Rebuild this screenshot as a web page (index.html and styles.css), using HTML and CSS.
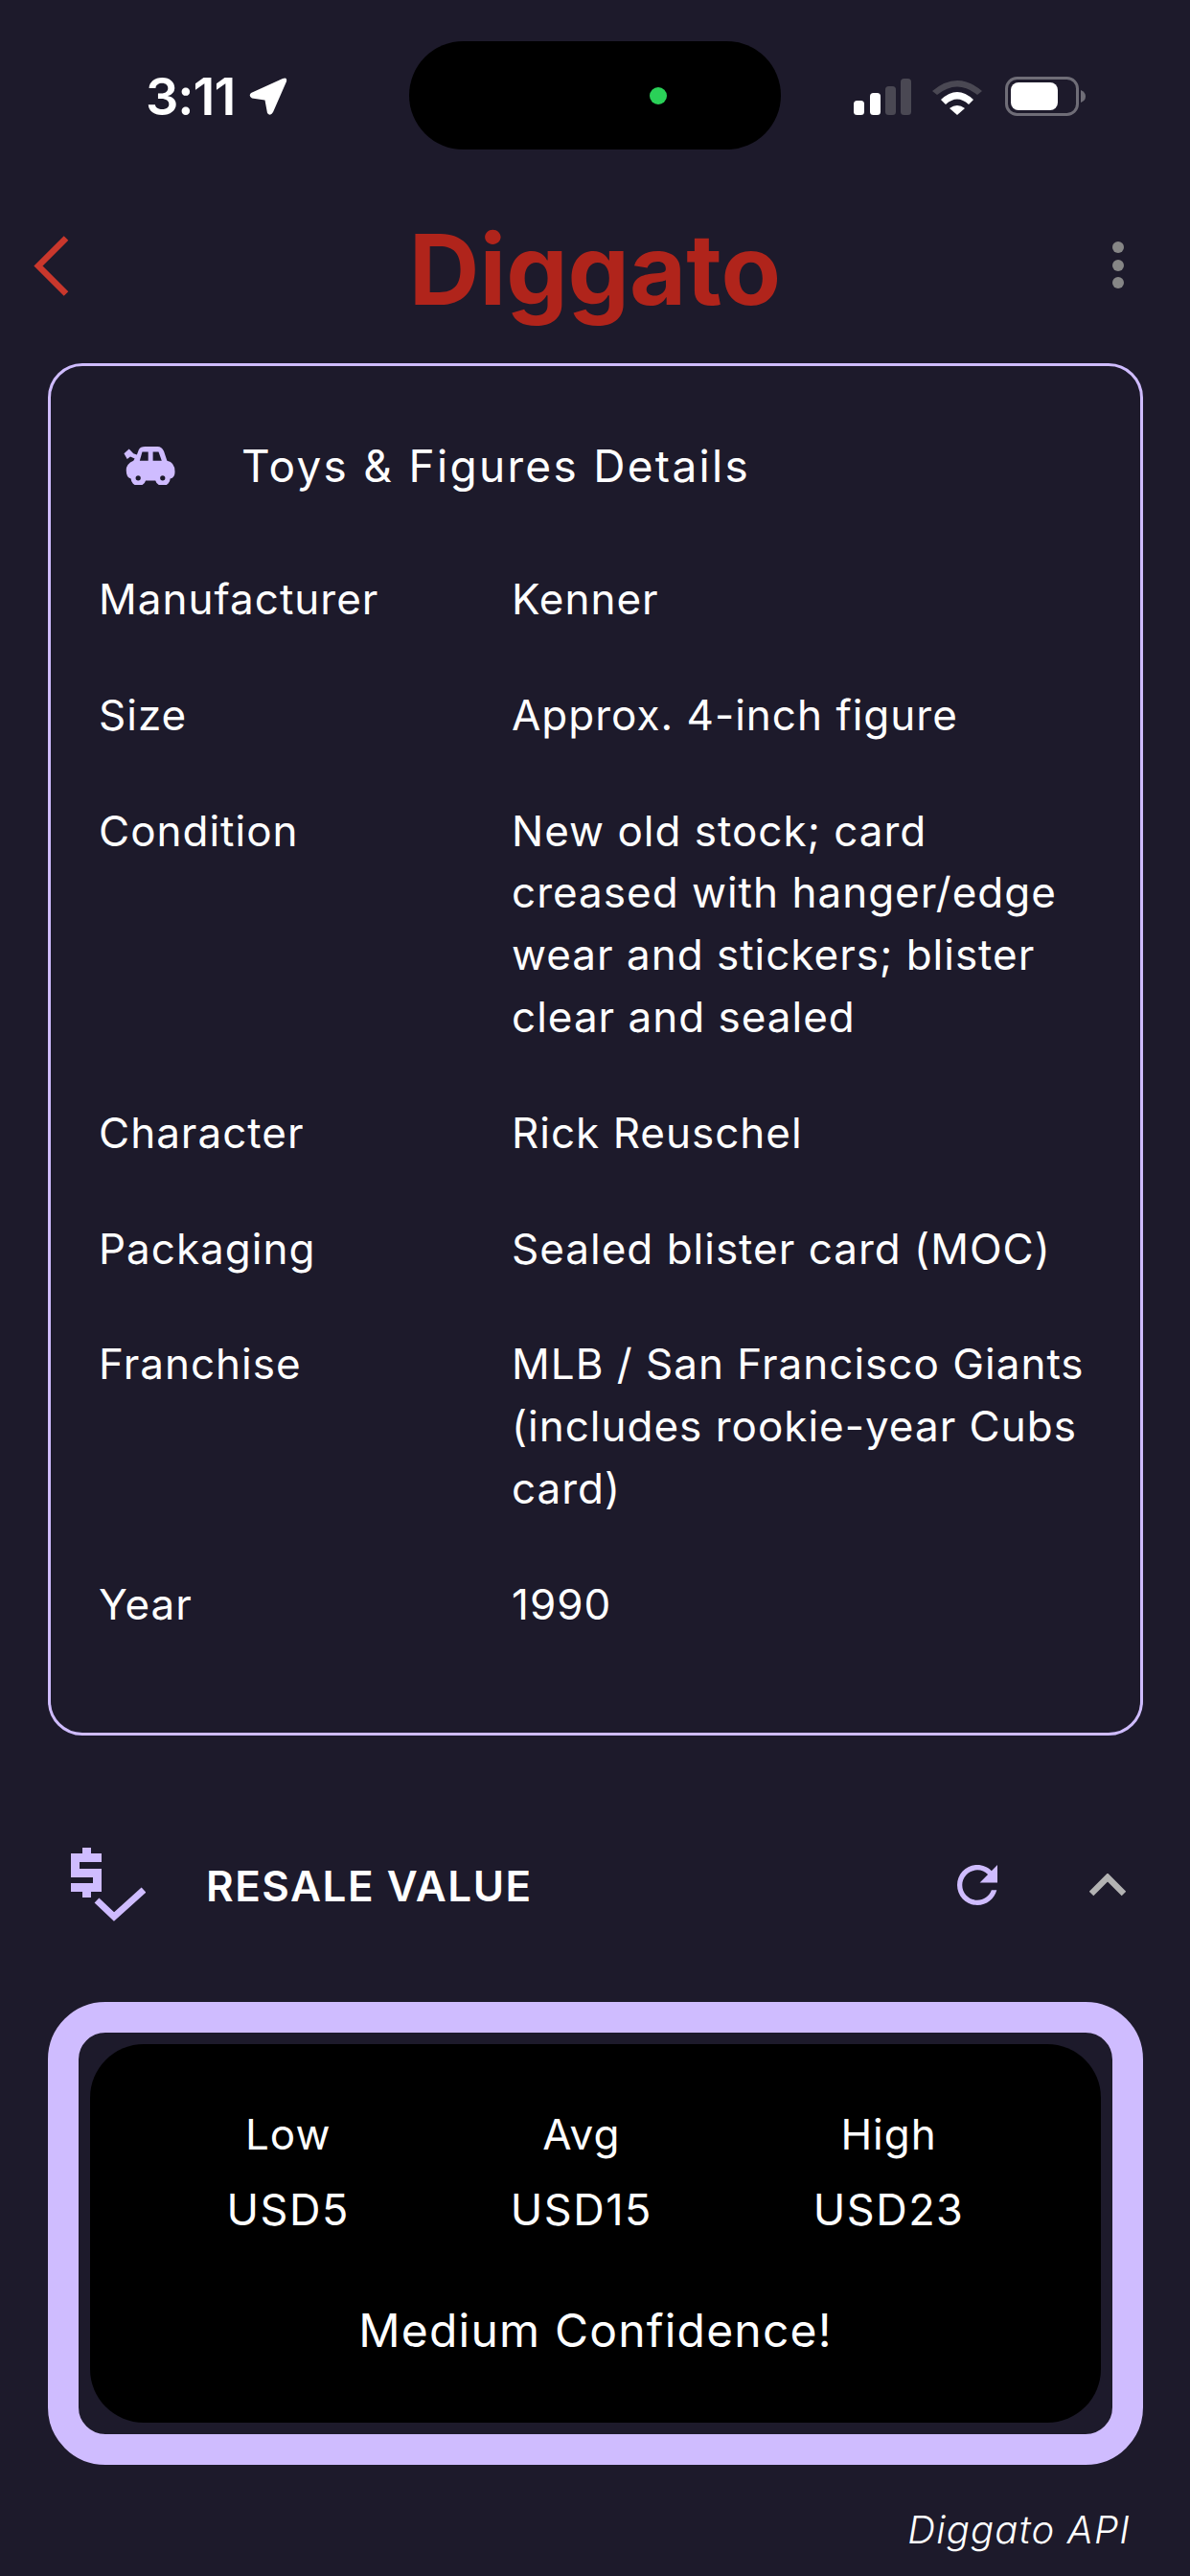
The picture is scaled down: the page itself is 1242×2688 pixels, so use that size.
FILE: index.html
```html
<!DOCTYPE html>
<html lang="en">
<head>
<meta charset="utf-8">
<title>Diggato</title>
<link rel="stylesheet" href="styles.css">
</head>
<body>
<div class="screen">
  <div class="status">
    <div class="status-left">
      <span class="time">3:11</span>
      <svg class="loc" viewBox="0 0 40 40"><path d="M35 1 Q40 -1 39 4 L25 36 Q22 41 19 37 L16.500 23.500 L3 21.500 Q-1 19 2 16 Z" fill="#fff"/></svg>
    </div>
    <div class="island"><span class="dot"></span></div>
    <div class="status-right">
      <svg class="signal" viewBox="0 0 60 38"><rect x="0" y="23" width="11" height="15" rx="3.500" fill="#fff"/><rect x="17" y="15" width="11" height="23" rx="3.500" fill="#fff"/><rect x="33" y="8" width="11" height="30" rx="3.500" fill="#4a4853"/><rect x="49" y="0" width="11" height="38" rx="3.500" fill="#4a4853"/></svg>
      <svg class="wifi" viewBox="0 0 52 38"><path d="M0 13 Q26 -9 52 13 L47 17 Q26 0 5 17 Z" fill="#4a4853"/><path d="M9 22 Q26 6 43 22 L38 27 Q26 16 14 27 Z" fill="#fff"/><path d="M18 31 Q26 25 34 31 L26 38 Z" fill="#fff"/></svg>
      <svg class="battery" viewBox="0 0 84 41"><rect x="1.500" y="1.500" width="74" height="38" rx="11" fill="none" stroke="#6f6d77" stroke-width="3"/><rect x="6" y="6" width="49" height="29" rx="8" fill="#fff"/><path d="M79 14 Q84 16 84 20.500 Q84 25 79 27 Z" fill="#6f6d77"/></svg>
    </div>
  </div>

  <header class="appbar">
    <svg class="back" viewBox="0 0 37 63"><path d="M34 2.500 L5 31.500 L34 60.500" fill="none" stroke="#c9372c" stroke-width="6.500"/></svg>
    <h1 class="brand">Diggato</h1>
    <div class="more"><i></i><i></i><i></i></div>
  </header>

  <section class="card">
    <div class="card-head">
      <svg class="car" viewBox="58 50 162 122"><path fill-rule="evenodd" fill="#cfbcff" d="M58 72 L74 58 L88 72 L99 76 L105 60 Q110 50 125 50 H165 Q178 50 185 65 L195 95 Q220 100 220 130 Q220 150 205 152 A24 24 0 0 1 158 158 H127 A24 24 0 0 1 80 152 Q65 150 65 125 Q65 105 88 95 L92 88 L78 82 L68 90 Z M116 67 H135 V95 H108 Z M150 67 H168 L178 95 H150 Z M103 142 A8 8 0 1 0 103 158 A8 8 0 1 0 103 142 Z M181 142 A8 8 0 1 0 181 158 A8 8 0 1 0 181 142 Z"/></svg>
      <span class="card-title">Toys &amp; Figures Details</span>
    </div>
    <dl class="rows">
      <div class="row"><dt>Manufacturer</dt><dd>Kenner</dd></div>
      <div class="row"><dt>Size</dt><dd>Approx. 4-inch figure</dd></div>
      <div class="row"><dt>Condition</dt><dd>New old stock; card creased with hanger/edge wear and stickers; blister clear and sealed</dd></div>
      <div class="row"><dt>Character</dt><dd>Rick Reuschel</dd></div>
      <div class="row"><dt>Packaging</dt><dd>Sealed blister card (MOC)</dd></div>
      <div class="row"><dt>Franchise</dt><dd>MLB / San Francisco Giants (includes rookie-year Cubs card)</dd></div>
      <div class="row"><dt>Year</dt><dd>1990</dd></div>
    </dl>
  </section>

  <section class="resale-head">
    <svg class="resale-icon" viewBox="0 0 79 78"><path fill="#cfbcff" d="M13 0 H22 V6 H33 V15 H10 V22 H33 V46 H22 V52 H13 V46 H1 V37 H24 V31 H1 V6 H13 Z"/><path fill="none" stroke="#cfbcff" stroke-width="7" d="M28 55 L46 72 L77 44"/></svg>
    <h2 class="resale-title">RESALE VALUE</h2>
    <svg class="refresh" viewBox="4 4 16 16"><path fill="#cfbcff" d="M17.650 6.350C16.200 4.900 14.210 4 12 4c-4.420 0-7.990 3.580-7.990 8s3.570 8 7.990 8c3.730 0 6.840-2.550 7.730-6h-2.080c-.82 2.330-3.040 4-5.650 4-3.310 0-6-2.690-6-6s2.690-6 6-6c1.660 0 3.140.69 4.220 1.780L13 11h7V4l-2.350 2.350z"/></svg>
    <svg class="chev" viewBox="0 0 38 24"><path d="M2 21 L19 4 L36 21" fill="none" stroke="#b3b3b3" stroke-width="6.500"/></svg>
  </section>

  <section class="ring">
    <div class="value">
      <div class="cols">
        <div class="col"><span class="col-label">Low</span><span>USD5</span></div>
        <div class="col"><span class="col-label">Avg</span><span>USD15</span></div>
        <div class="col"><span class="col-label">High</span><span>USD23</span></div>
      </div>
      <p class="confidence">Medium Confidence!</p>
    </div>
  </section>

  <footer class="api">Diggato API</footer>
</div>
</body>
</html>
```

FILE: styles.css
```css
* { box-sizing: border-box; }
html, body { margin: 0; padding: 0; }
body { background: #1d1a2b; font-family: Inter, "Liberation Sans", sans-serif; color: #fff; }
.screen { width: 1242px; height: 2688px; overflow: hidden; display: flex; flex-direction: column; }

.status { height: 158px; padding-top: 43px; display: flex; align-items: flex-start; position: relative; }
.status-left { position: absolute; left: 152px; top: 75px; display: flex; align-items: center; gap: 15px; }
.time { font-size: 54px; font-weight: 600; line-height: 52px; letter-spacing: -1px; }
.loc { width: 40px; height: 40px; }
.island { width: 388px; height: 113px; margin-left: 427px; background: #000; border-radius: 57px; position: relative; }
.dot { position: absolute; left: 251px; top: 48px; width: 18px; height: 18px; border-radius: 50%; background: #2ad158; }
.status-right { position: absolute; left: 891px; top: 80px; display: flex; align-items: center; }
.signal { width: 60px; height: 38px; }
.wifi { width: 52px; height: 38px; margin-left: 22px; }
.battery { width: 84px; height: 41px; margin-left: 24px; }

.appbar { height: 221px; position: relative; display: flex; justify-content: center; padding-top: 71px; }
.back { position: absolute; left: 35px; top: 88px; width: 37px; height: 63px; }
.brand { margin: 0; font-family: Inter, Roboto, sans-serif; font-size: 102px; font-weight: 700; line-height: 104px; color: #b0241b; }
.more { position: absolute; left: 1161px; top: 94px; display: flex; flex-direction: column; gap: 6.500px; }
.more i { display: block; width: 12px; height: 12px; border-radius: 50%; background: #868686; }

.card { margin: 0 49px 0 50px; height: 1432px; border: 3px solid #cfbcff; border-radius: 36px; flex-shrink: 0; padding: 0 50px; }
.card-head { height: 122px; display: flex; align-items: center; margin-top: 43px; padding-left: 26px; margin-bottom: 46px; }
.car { width: 54px; height: 40px; }
.card-title { margin-left: 69px; font-size: 46px; letter-spacing: 2.300px; line-height: 60px; }
.rows { margin: 0; display: flex; flex-direction: column; gap: 56px; }
.row { display: grid; grid-template-columns: 431px 1fr; }
.row dt, .row dd { margin: 0; font-size: 44px; line-height: 64.800px; letter-spacing: 1px; }

.resale-head { height: 278px; flex-shrink: 0; position: relative; }
.resale-icon { position: absolute; left: 73px; top: 117px; width: 79px; height: 78px; }
.resale-title { position: absolute; left: 215px; top: 127px; margin: 0; font-size: 44px; font-weight: 600; line-height: 60px; letter-spacing: 1.500px; }
.refresh { position: absolute; left: 999px; top: 135px; width: 42px; height: 42px; }
.chev { position: absolute; left: 1137px; top: 144px; width: 38px; height: 24px; }

.ring { margin: 0 49px 0 50px; height: 483px; flex-shrink: 0; border: 32px solid #cfbcff; border-radius: 60px; padding: 12px; }
.value { height: 100%; background: #000; border-radius: 56px; padding-top: 56px; }
.cols { display: flex; justify-content: center; gap: 168px; }
.col { display: flex; flex-direction: column; align-items: center; font-size: 45px; line-height: 77.500px; letter-spacing: 1.500px; }
.col-label { font-size: 44px; letter-spacing: 1px; }
.confidence { margin: 58px 0 0; text-align: center; font-size: 48px; line-height: 60px; letter-spacing: 1.200px; }

.api { margin: 45px 62px 0 0; text-align: right; font-size: 40px; font-style: italic; font-weight: 300; line-height: 46px; letter-spacing: 1.200px; }
```
